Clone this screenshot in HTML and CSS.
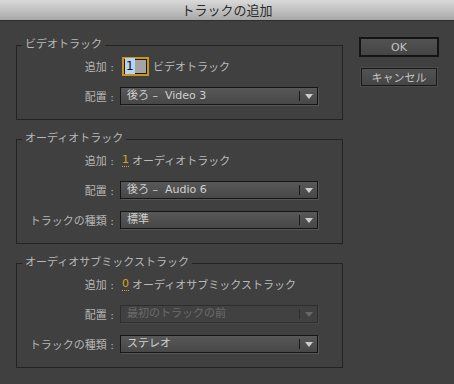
FILE: index.html
```html
<!doctype html>
<html>
<head>
  <meta charset='utf-8'>
  <title>トラックの追加</title>
  <link rel="stylesheet" href="styles.css">
</head>
<body>
<div class='titlebar'>トラックの追加</div>
<div class='dialog'>
  <div class='groups'>
    <fieldset class='group'>
      <legend>ビデオトラック</legend>
      <div class='rows'>
        <span class='lbl'>追加 :</span>
        <div class='field'><span class='num-input'><span class='sel'>1</span></span><span class='after'>ビデオトラック</span></div>
        <span class='lbl'>配置 :</span>
        <div class='field'>
          <div class='dropdown'><span class='value'>後ろ – &nbsp;Video 3</span><span class='arrow'><svg width='8' height='5' viewBox='0 0 8 5'><path d='M0 0H8L4 5Z'/></svg></span></div>
        </div>
      </div>
    </fieldset>
    <fieldset class='group'>
      <legend>オーディオトラック</legend>
      <div class='rows'>
        <span class='lbl'>追加 :</span>
        <div class='field'><span class='count'>1</span><span class='after-count'>オーディオトラック</span></div>
        <span class='lbl'>配置 :</span>
        <div class='field'>
          <div class='dropdown'><span class='value'>後ろ – &nbsp;Audio 6</span><span class='arrow'><svg width='8' height='5' viewBox='0 0 8 5'><path d='M0 0H8L4 5Z'/></svg></span></div>
        </div>
        <span class='lbl'>トラックの種類 :</span>
        <div class='field'>
          <div class='dropdown'><span class='value'>標準</span><span class='arrow'><svg width='8' height='5' viewBox='0 0 8 5'><path d='M0 0H8L4 5Z'/></svg></span></div>
        </div>
      </div>
    </fieldset>
    <fieldset class='group'>
      <legend>オーディオサブミックストラック</legend>
      <div class='rows'>
        <span class='lbl'>追加 :</span>
        <div class='field'><span class='count'>0</span><span class='after-count'>オーディオサブミックストラック</span></div>
        <span class='lbl'>配置 :</span>
        <div class='field'>
          <div class='dropdown disabled'><span class='value'>最初のトラックの前</span><span class='arrow'><svg width='8' height='5' viewBox='0 0 8 5'><path d='M0 0H8L4 5Z'/></svg></span></div>
        </div>
        <span class='lbl'>トラックの種類 :</span>
        <div class='field'>
          <div class='dropdown'><span class='value'>ステレオ</span><span class='arrow'><svg width='8' height='5' viewBox='0 0 8 5'><path d='M0 0H8L4 5Z'/></svg></span></div>
        </div>
      </div>
    </fieldset>
  </div>
  <div class='buttons'>
    <button class='btn btn-ok'>OK</button>
    <button class='btn btn-cancel'>キャンセル</button>
  </div>
</div>
</body>
</html>
```
FILE: styles.css
```css
*{margin:0;padding:0;box-sizing:border-box;}
body{background:#404040;width:454px;height:384px;overflow:hidden;font:11px "DejaVu Sans","Noto Sans CJK JP",sans-serif;color:#bababa;}
.titlebar{height:21px;line-height:20px;text-align:center;font-size:13px;font-family:"Noto Sans CJK JP",sans-serif;color:#2c2c2c;background:linear-gradient(#dadada,#a8a8a8);border-bottom:1px solid #2e2e2e;}
.dialog{display:flex;align-items:flex-start;padding:16px 0 0 16px;}
.groups{width:327px;padding-top:1px;display:flex;flex-direction:column;gap:12px;}
.group{border:1px solid #232323;padding:4px 5px 13px;min-width:0;}
.group legend{padding:0 3px;line-height:14px;color:#b8b8b8;}
.rows{display:grid;grid-template-columns:94px 1fr;column-gap:4px;row-gap:10px;grid-auto-rows:20px;align-items:center;}
.lbl{text-align:right;padding-right:2px;white-space:nowrap;color:#b4b4b4;}
.field{display:flex;align-items:center;height:20px;}
.num-input{width:27px;height:19px;margin-left:2px;border:2px solid #c8951f;box-shadow:inset 0 0 0 1px #1c1c1c;background:#a4a4a4;padding-left:1px;display:flex;align-items:center;}
.sel{background:#b9d3f2;color:#111;font-size:12px;line-height:16px;padding:0 1px;}
.after{margin-left:4px;}
.count{margin-left:2px;color:#d9a520;line-height:12px;border-bottom:1px dotted #d9a520;}
.after-count{margin-left:3px;}
.dropdown{width:198px;height:18px;border:1px solid #151515;box-shadow:1px 1px 0 #565656;background:linear-gradient(#585858,#474747);display:flex;color:#cfcfcf;}
.dropdown .value{flex:1;padding-left:6px;line-height:16px;white-space:nowrap;}
.dropdown .arrow{width:18px;margin:3px 0;border-left:1px solid #1a1a1a;display:flex;align-items:center;justify-content:center;}
.dropdown .arrow svg{fill:#cdcdcd;}
.dropdown.disabled{background:#414141;border-color:#2e2e2e;box-shadow:1px 1px 0 #484848;color:#6c6c6c;}
.dropdown.disabled .arrow{border-left-color:#2e2e2e;}
.dropdown.disabled .arrow svg{fill:#686868;}
.buttons{display:flex;flex-direction:column;align-items:center;margin-left:16px;}
.btn{font:11px "DejaVu Sans","Noto Sans CJK JP",sans-serif;color:#c4c4c4;background:linear-gradient(#525252,#454545);cursor:pointer;}
.btn-ok{width:80px;height:20px;border:2px solid #141414;}
.btn-cancel{width:76px;height:18px;margin-top:11px;border:1px solid #191919;box-shadow:0 0 0 1px #4b4b4b;}
```
